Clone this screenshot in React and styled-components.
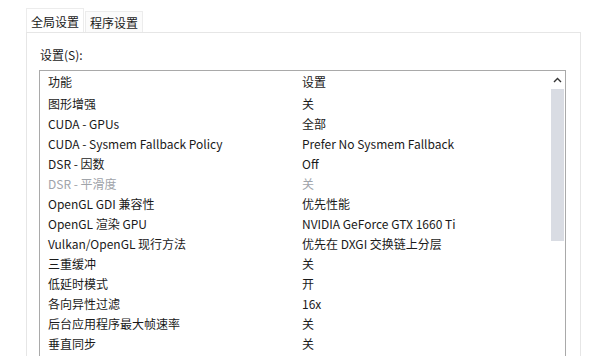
import React from 'react';
import styled, { createGlobalStyle } from 'styled-components';

const GlobalStyle = createGlobalStyle`
  html, body {
    margin: 0;
    padding: 0;
    background: #ffffff;
  }
  body {
    font-family: "Noto Sans CJK SC", "Noto Sans", sans-serif;
    font-size: 12px;
    color: #1a1a1a;
  }
`;

const Page = styled.div`
  width: 609px;
  height: 356px;
  overflow: hidden;
  padding: 8px 28px 0 26px;
  box-sizing: border-box;
`;

const TabStrip = styled.div`
  display: flex;
  align-items: flex-end;
  height: 24px;
`;

const Tab = styled.div`
  height: ${({ active }) => (active ? '24px' : '21px')};
  padding: 0 ${({ active }) => (active ? '4px' : '4px')};
  padding-top: 1px;
  display: flex;
  align-items: center;
  font-size: 12px;
  background: ${({ active }) => (active ? '#ffffff' : '#fbfbfb')};
  border: 1px solid #ececec;
  border-bottom: none;
  margin-right: 1px;
  box-sizing: border-box;
`;

const Panel = styled.div`
  border: 1px solid #e6e6e6;
  height: 400px;
  padding: 13px 14px 0 12px;
  box-sizing: border-box;
`;

const Label = styled.div`
  height: 24px;
  line-height: 18px;
  padding-left: 1px;
`;

const ListBox = styled.div`
  border: 1px solid #a9a9a9;
  height: 300px;
  display: flex;
`;

const ListBody = styled.div`
  flex: 1;
  padding-left: 8px;
`;

const Row = styled.div`
  display: grid;
  grid-template-columns: 254px 1fr;
  height: ${({ head }) => (head ? '23px' : '20px')};
  line-height: ${({ head }) => (head ? '22px' : '20px')};
  color: ${({ disabled }) => (disabled ? '#a0a4aa' : '#1a1a1a')};
  white-space: nowrap;
`;

const Scrollbar = styled.div`
  width: 15px;
  display: flex;
  flex-direction: column;
  align-items: stretch;
`;

const Arrow = styled.div`
  height: 18px;
  display: flex;
  align-items: center;
  justify-content: center;
`;

const Thumb = styled.div`
  height: 152px;
  margin: 0 1px;
  background: #d9dce3;
`;

const rows = [
  ['图形增强', '关'],
  ['CUDA - GPUs', '全部'],
  ['CUDA - Sysmem Fallback Policy', 'Prefer No Sysmem Fallback'],
  ['DSR - 因数', 'Off'],
  ['DSR - 平滑度', '关', true],
  ['OpenGL GDI 兼容性', '优先性能'],
  ['OpenGL 渲染 GPU', 'NVIDIA GeForce GTX 1660 Ti'],
  ['Vulkan/OpenGL 现行方法', '优先在 DXGI 交换链上分层'],
  ['三重缓冲', '关'],
  ['低延时模式', '开'],
  ['各向异性过滤', '16x'],
  ['后台应用程序最大帧速率', '关'],
  ['垂直同步', '关'],
];

const App = () => (
  <>
    <GlobalStyle />
    <Page>
      <TabStrip>
        <Tab active>全局设置</Tab>
        <Tab>程序设置</Tab>
      </TabStrip>
      <Panel>
        <Label>设置(S):</Label>
        <ListBox>
          <ListBody>
            <Row head>
              <span>功能</span>
              <span>设置</span>
            </Row>
            {rows.map(([name, value, disabled]) => (
              <Row key={name} disabled={disabled}>
                <span>{name}</span>
                <span>{value}</span>
              </Row>
            ))}
          </ListBody>
          <Scrollbar>
            <Arrow>
              <svg width="9" height="6" viewBox="0 0 9 6">
                <path d="M1 5 L4.5 1.5 L8 5" fill="none" stroke="#333" strokeWidth="1.4" />
              </svg>
            </Arrow>
            <Thumb />
          </Scrollbar>
        </ListBox>
      </Panel>
    </Page>
  </>
);

export default App;
